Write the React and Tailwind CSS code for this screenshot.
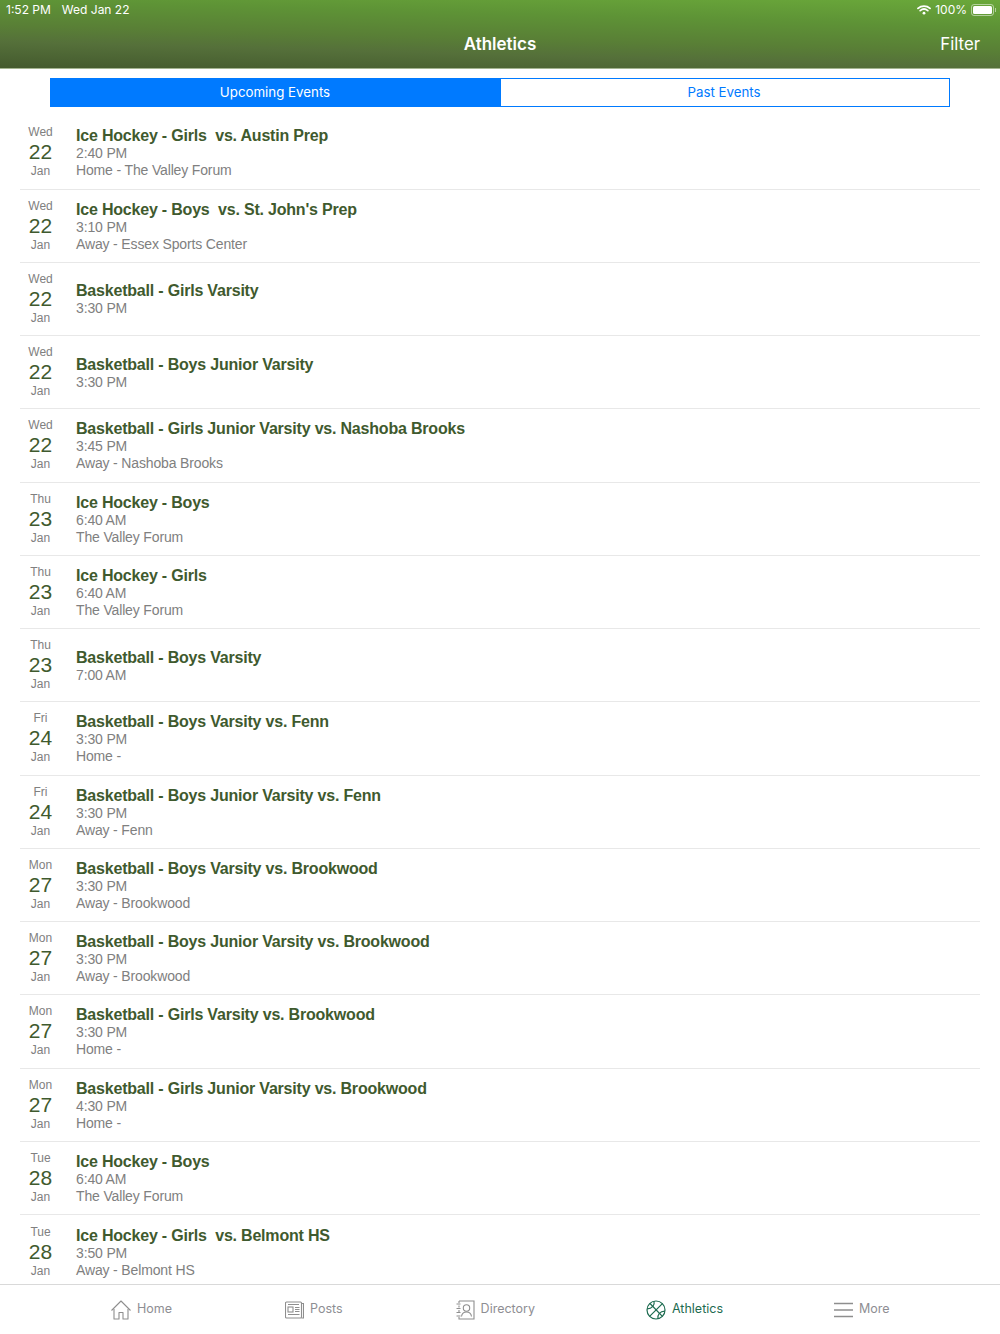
const F = '[font-family:"Liberation_Sans",Arial,sans-serif]';
const rows = [
  ["Wed","22","Jan","Ice Hockey - Girls  vs. Austin Prep","2:40 PM","Home - The Valley Forum"],
  ["Wed","22","Jan","Ice Hockey - Boys  vs. St. John's Prep","3:10 PM","Away - Essex Sports Center"],
  ["Wed","22","Jan","Basketball - Girls Varsity","3:30 PM",""],
  ["Wed","22","Jan","Basketball - Boys Junior Varsity","3:30 PM",""],
  ["Wed","22","Jan","Basketball - Girls Junior Varsity vs. Nashoba Brooks","3:45 PM","Away - Nashoba Brooks"],
  ["Thu","23","Jan","Ice Hockey - Boys","6:40 AM","The Valley Forum"],
  ["Thu","23","Jan","Ice Hockey - Girls","6:40 AM","The Valley Forum"],
  ["Thu","23","Jan","Basketball - Boys Varsity","7:00 AM",""],
  ["Fri","24","Jan","Basketball - Boys Varsity vs. Fenn","3:30 PM","Home -"],
  ["Fri","24","Jan","Basketball - Boys Junior Varsity vs. Fenn","3:30 PM","Away - Fenn"],
  ["Mon","27","Jan","Basketball - Boys Varsity vs. Brookwood","3:30 PM","Away - Brookwood"],
  ["Mon","27","Jan","Basketball - Boys Junior Varsity vs. Brookwood","3:30 PM","Away - Brookwood"],
  ["Mon","27","Jan","Basketball - Girls Varsity vs. Brookwood","3:30 PM","Home -"],
  ["Mon","27","Jan","Basketball - Girls Junior Varsity vs. Brookwood","4:30 PM","Home -"],
  ["Tue","28","Jan","Ice Hockey - Boys","6:40 AM","The Valley Forum"],
  ["Tue","28","Jan","Ice Hockey - Girls  vs. Belmont HS","3:50 PM","Away - Belmont HS"],
];

function Row({ r, last }) {
  return (
    <div className={`flex h-[73.25px] shrink-0 items-center ${last ? "" : "border-b border-[#e8e8e8]"}`}>
      <div className={`${F} mb-[1px] flex w-[41px] shrink-0 flex-col items-center`}>
        <div className="text-[12px] leading-[17px] text-[#808080]">{r[0]}</div>
        <div className="text-[21px] leading-[22px] text-[#3f5a2e]">{r[1]}</div>
        <div className="text-[12px] leading-[16px] text-[#808080]">{r[2]}</div>
      </div>
      <div className="ml-[15px] flex flex-col pt-[1px]">
        <div className={`${F} whitespace-pre text-[16px] font-bold leading-[19px] tracking-[-0.2px] text-[#3f5a2e]`}>{r[3]}</div>
        <div className={`${F} text-[14px] leading-[17px] tracking-[-0.15px] text-[#808080]`}>{r[4]}</div>
        {r[5] && <div className={`${F} text-[14px] leading-[17px] tracking-[-0.15px] text-[#808080]`}>{r[5]}</div>}
      </div>
    </div>
  );
}

const gray = "#8e8e8e";

function Tab({ icon, label, active, className }) {
  return (
    <div className={`flex items-center gap-[6px] ${className}`}>
      {icon}
      <span className={`text-[12.5px] ${active ? "text-[#1d6b50]" : "text-[#8e8e93]"}`}>{label}</span>
    </div>
  );
}

export default function App() {
  return (
    <div className="flex h-[1334px] w-[1000px] flex-col overflow-hidden bg-white font-['Inter',sans-serif]">
      <header className="flex h-[69px] shrink-0 flex-col border-b border-[#a3b48f] bg-[linear-gradient(181.5deg,#6aa83a_0%,#5e9336_28%,#597f36_55%,#55703a_72%,#445a2e_100%)] text-white">
        <div className="flex h-[20px] items-center justify-between pl-[6px] pr-[4px] text-[12px]">
          <div className="flex gap-[11px]">
            <span>1:52 PM</span>
            <span>Wed Jan 22</span>
          </div>
          <div className="flex items-center gap-[4px]">
            <svg width="14" height="10" viewBox="0 0 14 10" fill="none" stroke="white" strokeLinecap="round">
              <path d="M1 3.4C4.4 .4 9.6 .4 13 3.4" strokeWidth="1.8" />
              <path d="M3.2 5.6C5.4 3.8 8.6 3.8 10.8 5.6" strokeWidth="1.8" />
              <circle cx="7" cy="8.2" r="1.4" fill="white" stroke="none" />
            </svg>
            <span>100%</span>
            <div className="flex items-center">
              <div className="flex h-[12px] w-[23px] items-center rounded-[3px] border border-white/50 p-[1px]">
                <div className="h-full w-full rounded-[1.5px] bg-white" />
              </div>
              <div className="ml-[1px] h-[4px] w-[1px] bg-white/50" />
            </div>
          </div>
        </div>
        <div className="relative flex h-[48px] items-center justify-center pt-[1px]">
          <span className="text-[17px] font-semibold">Athletics</span>
          <span className="absolute right-[20px] text-[16.8px]">Filter</span>
        </div>
      </header>

      <div className="mx-[50px] mt-[9px] flex h-[29px] shrink-0 border border-[#007aff] text-[13.3px]">
        <div className="flex w-[450px] items-center justify-center bg-[#007aff] pr-[2px] pt-[1px] text-white">Upcoming Events</div>
        <div className="flex flex-1 items-center justify-center pr-[2px] pt-[1px] text-[#007aff]">Past Events</div>
      </div>

      <main className="mx-[20px] mt-[9.25px] flex min-h-0 flex-1 flex-col overflow-hidden">
        {rows.map((r, i) => <Row key={i} r={r} last={i === rows.length - 1} />)}
      </main>

      <nav className="relative h-[50px] shrink-0 border-t border-[#d9d9d9]">
        <div className="flex h-full items-center">
          <Tab className="ml-[111px]" label="Home" icon={
            <svg width="20" height="20" viewBox="0 0 20 20" fill="none" stroke={gray} strokeWidth="1.1" strokeLinejoin="round">
              <path d="M.5 10.5 10 1l9.5 9.5" /><path d="M3 9v10h5v-6.5h4V19h5V9" />
            </svg>} />
          <Tab className="ml-[113px]" label="Posts" icon={
            <svg width="19" height="18" viewBox="0 0 19 18" fill="none" stroke={gray} strokeWidth="1.1">
              <rect x=".5" y="1" width="16" height="16" rx="1" /><path d="M16.5 2.5H18.5V17H16.5" />
              <rect x="3" y="6" width="5" height="5" /><path d="M3 3.5h11M10 6.5h4.5M10 8.5h4.5M10 10.5h4.5M3 13.5h11.5" />
            </svg>} />
          <Tab className="ml-[113px]" label="Directory" icon={
            <svg width="19" height="20" viewBox="0 0 19 20" fill="none" stroke={gray} strokeWidth="1.1">
              <path d="M3 1h15v18H3v-2M3 3V1M3 5.5v2M3 10v2" /><path d="M.5 4h4M.5 8.5h4M.5 12.5h4M.5 16h4" />
              <circle cx="10.5" cy="8" r="3.2" /><path d="M5.5 16.5c.4-3 2-4.5 5-4.5s4.6 1.5 5 4.5" />
            </svg>} />
          <Tab className="ml-[111px]" active label="Athletics" icon={
            <svg width="20" height="20" viewBox="0 0 20 20" fill="none" stroke="#1d6b50" strokeWidth="1.2">
              <circle cx="10" cy="10" r="9" /><path d="M3.6 16.4 16.4 3.6" /><path d="M4 3.5 16.4 16.4" />
              <path d="M8 1.2C9 5 6 8.8 1.2 8.8M12 18.8C11 15 14 11.2 18.8 11.2" />
            </svg>} />
          <Tab className="ml-[111px]" label="More" icon={
            <svg width="19" height="16" viewBox="0 0 19 16" fill="none" stroke={gray} strokeWidth="1.4">
              <path d="M0 1.5h19M0 8h19M0 14.5h19" />
            </svg>} />
        </div>
      </nav>
    </div>
  );
}
